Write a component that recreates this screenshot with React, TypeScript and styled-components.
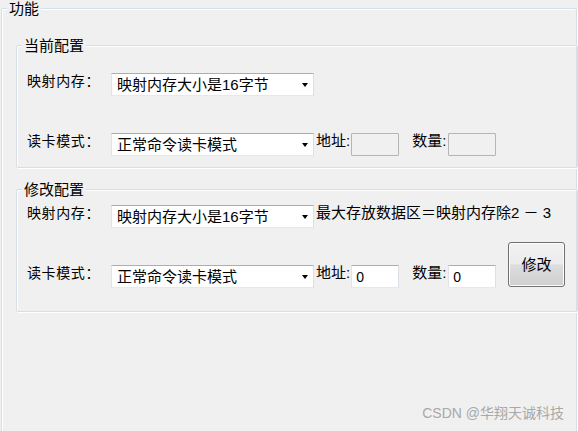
import React from 'react';
import styled, { createGlobalStyle } from 'styled-components';

const Global = createGlobalStyle`
  *, *::before, *::after { box-sizing: border-box; }
  html, body { margin: 0; padding: 0; background: #f0f0f0; }
  body {
    width: 578px; height: 431px; overflow: hidden;
    font-family: "Liberation Sans", "Noto Sans CJK SC", sans-serif;
    color: #000;
  }
  #root { position: relative; width: 578px; height: 431px; overflow: hidden; }
`;

const GroupBox = styled.fieldset`
  margin: 0;
  padding: 0;
  min-width: 0;
  border: 1px solid #d5dfe5;
  border-radius: 2px;
  box-shadow: inset 1px 1px 0 #fff, 1px 1px 0 #fff;
`;

const Frame = styled(GroupBox)`
  margin-left: 1px;
  width: 576px;
  min-height: 480px;
`;

const Section = styled(GroupBox)`
  margin: 0 -2px 0 14px;
`;

const Title = styled.legend`
  margin-left: 5px;
  padding: 0 2px;
  font-size: 15px;
  line-height: 17px;
  background: #f0f0f0;
`;

const FrameBody = styled.div`
  display: flex;
  flex-direction: column;
  gap: 13px;
  padding-top: 20px;
`;

const CurrentBody = styled.div`
  display: flex;
  flex-direction: column;
  gap: 37px;
  padding: 19px 0 11px 10px;
`;

const EditGrid = styled.div`
  display: grid;
  grid-template-columns: 467px 57px;
  grid-template-rows: 23px 23px;
  column-gap: 14px;
  row-gap: 37px;
  padding: 7px 0 23px 10px;
`;

const Row = styled.div<{ $col?: string; $row?: string }>`
  display: flex;
  align-items: flex-start;
  height: 23px;
  grid-column: ${p => p.$col ?? 'auto'};
  grid-row: ${p => p.$row ?? 'auto'};
`;

const Label = styled.span`
  flex: none;
  width: 84px;
  font-size: 14px;
  line-height: 17px;
  letter-spacing: 0.6px;
  white-space: nowrap;
`;

const Side = styled.span<{ $gap: number }>`
  flex: none;
  margin-left: ${p => p.$gap}px;
  font-size: 15px;
  line-height: 15px;
  white-space: nowrap;
`;

const Combo = styled.div`
  position: relative;
  flex: none;
  width: 203px;
  height: 23px;
  padding-left: 5px;
  background: #fff;
  border: 1px solid;
  border-color: #abadb3 #dbdfe6 #e3e9ef #e2e3ea;
  font-size: 15px;
  line-height: 21px;
  white-space: nowrap;
  &::after {
    content: '';
    position: absolute;
    right: 5px;
    top: 9px;
    border-left: 3.5px solid transparent;
    border-right: 3.5px solid transparent;
    border-top: 4px solid #000;
  }
`;

const Field = styled.input<{ $gap: number }>`
  flex: none;
  width: 48px;
  height: 23px;
  margin: 0 0 0 ${p => p.$gap}px;
  padding: 0 0 0 4px;
  background: #fff;
  border: 1px solid;
  border-color: #abadb3 #dbdfe6 #e3e9ef #e2e3ea;
  border-radius: 1px;
  font: 14px/21px "Liberation Sans", sans-serif;
  color: #000;
  outline: none;
  &:disabled {
    background: #f0f0f0;
    border-color: #b5b5b5;
  }
`;

const Button = styled.button`
  grid-column: 2;
  grid-row: 1 / 3;
  align-self: end;
  width: 57px;
  height: 45px;
  margin-bottom: 1px;
  padding: 0;
  border: 1px solid #707070;
  border-radius: 3px;
  background: linear-gradient(#f2f2f2 0%, #ebebeb 48%, #dddddd 52%, #cfcfcf 100%);
  box-shadow: inset 0 0 0 1px #fcfcfc;
  font: 15px/17px "Liberation Sans", "Noto Sans CJK SC", sans-serif;
  color: #000;
`;

const Watermark = styled.div`
  position: absolute;
  right: 14px;
  bottom: 9px;
  font-size: 14px;
  line-height: 17px;
  color: #a8a8a8;
  white-space: nowrap;
`;

export default function App() {
  return (
    <>
      <Global />
      <Frame>
        <Title>功能</Title>
        <FrameBody>
          <Section>
            <Title>当前配置</Title>
            <CurrentBody>
              <Row>
                <Label>映射内存：</Label>
                <Combo>映射内存大小是16字节</Combo>
              </Row>
              <Row>
                <Label>读卡模式：</Label>
                <Combo>正常命令读卡模式</Combo>
                <Side $gap={2}>地址:</Side>
                <Field $gap={1} disabled value="" readOnly />
                <Side $gap={13}>数量:</Side>
                <Field $gap={2} disabled value="" readOnly />
              </Row>
            </CurrentBody>
          </Section>
          <Section>
            <Title>修改配置</Title>
            <EditGrid>
              <Row $col="1 / 3" $row="1">
                <Label>映射内存：</Label>
                <Combo>映射内存大小是16字节</Combo>
                <Side $gap={2}>最大存放数据区＝映射内存除2 － 3</Side>
              </Row>
              <Row $col="1" $row="2">
                <Label>读卡模式：</Label>
                <Combo>正常命令读卡模式</Combo>
                <Side $gap={2}>地址:</Side>
                <Field $gap={1} value="0" readOnly />
                <Side $gap={13}>数量:</Side>
                <Field $gap={2} value="0" readOnly />
              </Row>
              <Button type="button">修改</Button>
            </EditGrid>
          </Section>
        </FrameBody>
      </Frame>
      <Watermark>CSDN @华翔天诚科技</Watermark>
    </>
  );
}
